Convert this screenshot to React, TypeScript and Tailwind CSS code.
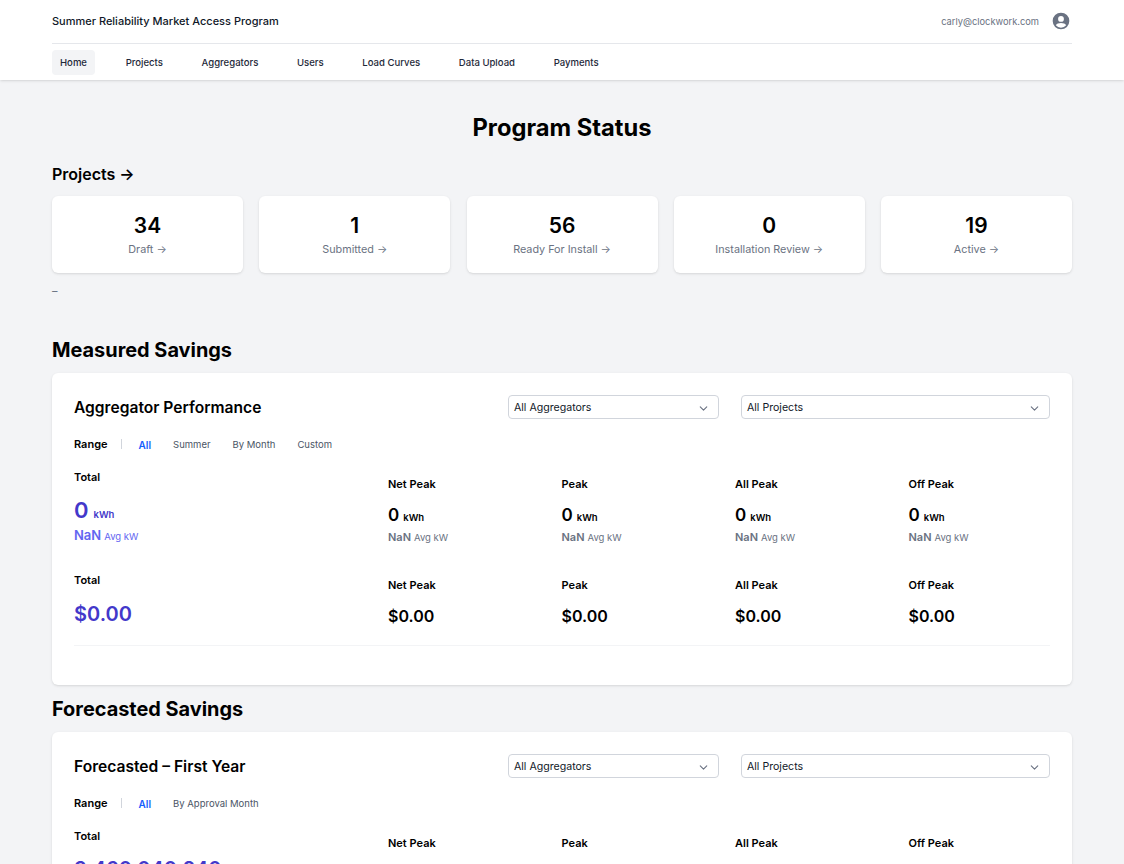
import { ChevronDown } from 'lucide-react';

const NAV = ['Home', 'Projects', 'Aggregators', 'Users', 'Load Curves', 'Data Upload', 'Payments'];

const STATUS = [
  { count: '34', label: 'Draft' },
  { count: '1', label: 'Submitted' },
  { count: '56', label: 'Ready For Install' },
  { count: '0', label: 'Installation Review' },
  { count: '19', label: 'Active' },
];

const COLUMNS = ['Net Peak', 'Peak', 'All Peak', 'Off Peak'];

function Select({ label, className }: { label: string; className: string }) {
  return (
    <div className={`flex h-6 items-center justify-between rounded border border-gray-300 bg-white pl-[5px] pr-[8px] pt-[2px] text-[10.6px] text-gray-900 ${className}`}>
      <span>{label}</span>
      <ChevronDown className="h-[13px] w-[13px] text-gray-500" />
    </div>
  );
}

function CardHeader({ title }: { title: string }) {
  return (
    <div className="flex h-6 items-center">
      <h3 className="w-[434px] pt-[2px] text-[15.6px] font-semibold text-black">{title}</h3>
      <Select label="All Aggregators" className="w-[211px]" />
      <Select label="All Projects" className="ml-[22px] w-[309px]" />
    </div>
  );
}

function RangeTabs({ tabs }: { tabs: string[] }) {
  return (
    <div className="mt-[18px] flex h-[14px] items-center text-[9.5px] text-gray-600">
      <span className="text-[11px] font-semibold text-black">Range</span>
      <span className="ml-[13px] mr-[17px] h-[10px] w-px bg-gray-300" />
      <span className="pt-[2px] text-[10px] font-semibold text-blue-600">All</span>
      {tabs.map((tab) => (
        <span key={tab} className="ml-[22px] pt-[2px]">{tab}</span>
      ))}
    </div>
  );
}

function EnergyStat({ label }: { label: string }) {
  return (
    <div className="pt-[7px]">
      <div className="text-[11px] font-semibold leading-[14px] text-black">{label}</div>
      <div className="mt-[13px] flex items-baseline leading-[22px] text-black">
        <span className="text-[17px] font-semibold">0</span>
        <span className="ml-[4px] text-[9.5px] font-semibold">kWh</span>
      </div>
      <div className="flex items-baseline text-gray-500">
        <span className="text-[11px] font-semibold">NaN</span>
        <span className="ml-[3px] text-[9.5px]">Avg kW</span>
      </div>
    </div>
  );
}

function MoneyStat({ label }: { label: string }) {
  return (
    <div className="pt-[5px]">
      <div className="text-[11px] font-semibold leading-[14px] text-black">{label}</div>
      <div className="mt-[13px] text-[16px] font-semibold leading-[22px] text-black">$0.00</div>
    </div>
  );
}

export default function App() {
  return (
    <div className="h-screen overflow-hidden bg-gray-100 font-['Inter',sans-serif]">
      <header className="bg-white px-[52px] shadow-sm">
        <div className="flex h-[44px] items-center justify-between border-b border-gray-200">
          <span className="text-[11px] font-medium text-gray-900">Summer Reliability Market Access Program</span>
          <div className="flex items-center">
            <span className="text-[9.3px] text-gray-500">carly@clockwork.com</span>
            <svg viewBox="0 0 24 24" fill="currentColor" className="mb-[2px] ml-[12px] mr-[1px] h-[20px] w-[20px] text-gray-500">
              <path fillRule="evenodd" clipRule="evenodd" d="M12 2a10 10 0 1 0 0 20 10 10 0 0 0 0-20Zm0 4a3.5 3.5 0 1 1 0 7 3.5 3.5 0 0 1 0-7Zm0 14a8 8 0 0 1-6.2-2.95C6.6 15.5 9.2 14.5 12 14.5s5.4 1 6.2 2.55A8 8 0 0 1 12 20Z" />
            </svg>
          </div>
        </div>
        <nav className="flex h-[36px] items-center gap-[22.7px]">
          {NAV.map((item, i) => (
            <span key={item} className={`rounded px-2 py-[6px] text-[9.55px] font-medium leading-[13px] text-gray-800 ${i === 0 ? 'bg-gray-100' : ''}`}>
              {item}
            </span>
          ))}
        </nav>
      </header>

      <main className="px-[52px]">
        <h1 className="pt-[32px] text-center text-[23.7px] font-bold leading-[32px] text-black">Program Status</h1>

        <h2 className="mt-[20px] text-[16px] font-semibold leading-[20px] text-black">Projects →</h2>
        <div className="mt-[12px] grid grid-cols-5 gap-[16.25px]">
          {STATUS.map((s) => (
            <div key={s.label} className="flex h-[77px] flex-col items-center rounded-md bg-white pt-[16px] shadow-sm">
              <span className="text-[21px] font-semibold leading-[28px] text-black">{s.count}</span>
              <span className="mt-[3px] text-[10.8px] leading-[14px] text-gray-500">{s.label} →</span>
            </div>
          ))}
        </div>
        <div className="mt-[11px] text-[11px] leading-[14px] text-gray-500">–</div>

        <h2 className="mt-[38px] text-[19.9px] font-bold leading-[28px] text-black">Measured Savings</h2>
        <section className="mt-[9px] h-[312px] rounded-md bg-white px-[22px] pt-[22px] shadow-sm">
          <CardHeader title="Aggregator Performance" />
          <RangeTabs tabs={['Summer', 'By Month', 'Custom']} />
          <div className="mt-[19px] grid grid-cols-[282px_repeat(4,1fr)] gap-x-8">
            <div>
              <div className="text-[11px] font-semibold leading-[14px] text-black">Total</div>
              <div className="mt-[12px] flex items-baseline leading-[28px] text-[#4338ca]">
                <span className="text-[22px] font-semibold">0</span>
                <span className="ml-[5px] text-[9.5px] font-semibold">kWh</span>
              </div>
              <div className="-mt-[3px] flex items-baseline text-[#6366f1]">
                <span className="text-[13px] font-semibold">NaN</span>
                <span className="ml-[3px] text-[9.5px]">Avg kW</span>
              </div>
            </div>
            {COLUMNS.map((c) => (
              <EnergyStat key={c} label={c} />
            ))}
          </div>
          <div className="mt-[27px] grid grid-cols-[282px_repeat(4,1fr)] gap-x-8">
            <div>
              <div className="text-[11px] font-semibold leading-[14px] text-black">Total</div>
              <div className="mt-[13px] text-[20px] font-semibold leading-[28px] text-[#4338ca]">$0.00</div>
            </div>
            {COLUMNS.map((c) => (
              <MoneyStat key={c} label={c} />
            ))}
          </div>
          <div className="mt-[17px] border-t border-gray-100" />
        </section>

        <h2 className="mt-[10px] text-[19.9px] font-bold leading-[28px] text-black">Forecasted Savings</h2>
        <section className="mt-[9px] rounded-md bg-white px-[22px] pt-[22px] shadow-sm">
          <CardHeader title="Forecasted – First Year" />
          <RangeTabs tabs={['By Approval Month']} />
          <div className="mt-[19px] grid grid-cols-[282px_repeat(4,1fr)] gap-x-8">
            <div>
              <div className="text-[11px] font-semibold leading-[14px] text-black">Total</div>
              <div className="mt-[12px] text-[20px] font-semibold leading-[28px] text-[#4338ca]">3,460,040,240</div>
            </div>
            {COLUMNS.map((c) => (
              <EnergyStat key={c} label={c} />
            ))}
          </div>
        </section>
      </main>
    </div>
  );
}
